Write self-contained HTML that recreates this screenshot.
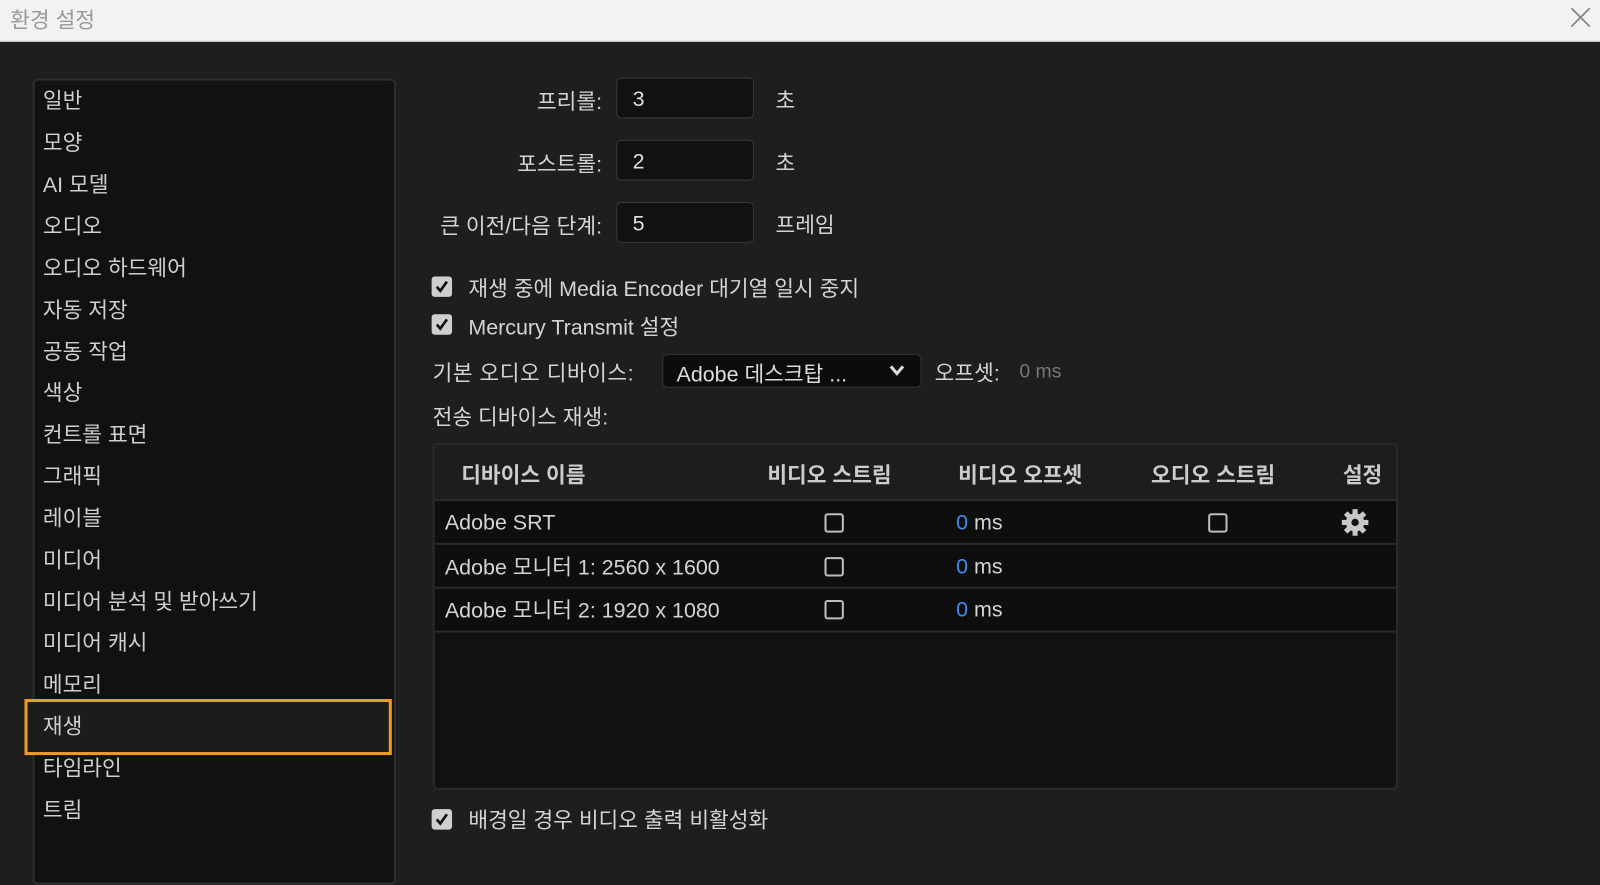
<!DOCTYPE html>
<html><head><meta charset="utf-8"><style>
*{box-sizing:border-box;margin:0;padding:0}
body{width:1600px;height:847px;overflow:hidden;background:#1e1e1e;font-family:"Liberation Sans","Noto Sans CJK KR",sans-serif;color:#d4d4d4;position:relative;font-size:21px}
#w{position:absolute;left:0;top:0;width:1568px;height:830px;transform:scale(1.0204);transform-origin:0 0}
.abs{position:absolute;white-space:nowrap}
.title{position:absolute;left:0;top:0;width:1600px;height:41px;background:#f2f2f2;border-bottom:1px solid #ccc}
.side{position:absolute;left:32px;top:77px;width:356px;height:790px;background:#111;border:2px solid #2e2e2e;border-radius:5px}
.it{position:absolute;left:42px;font-size:21px;color:#cfcfcf;line-height:24px;margin-top:3px}
.lbl{position:absolute;right:978px;text-align:right;white-space:nowrap}
.inp{position:absolute;left:604px;width:135px;height:40px;background:#111;border:1px solid #383838;border-radius:5px;padding:9px 0 0 15px;color:#e0e0e0}
.cb{position:absolute;left:423px;width:20px;height:20px;background:#cfcfcf;border-radius:3px}
.cb svg{position:absolute;left:2px;top:2px}
.sq{position:absolute;width:19px;height:19px;border:2.5px solid #bdbdbd;border-radius:3px}
.row{position:absolute;left:0;width:943px;border-bottom:2px solid #2b2b2b;background:#0e0e0e}
</style></head><body>
<div id="w">
<div class="title" style="width:1568px"></div>
<div class="abs" style="left:10px;top:4px;font-size:21px;color:#999">환경 설정</div>
<svg class="abs" style="left:1538px;top:6px" width="22" height="22"><path d="M2 2L20 20M20 2L2 20" stroke="#888" stroke-width="1.8"/></svg>
<div class="side"></div>
<div class="it" style="top:85px">일반</div>
<div class="it" style="top:126px">모양</div>
<div class="it" style="top:167px">AI 모델</div>
<div class="it" style="top:208px">오디오</div>
<div class="it" style="top:249px">오디오 하드웨어</div>
<div class="it" style="top:290px">자동 저장</div>
<div class="it" style="top:331px">공동 작업</div>
<div class="it" style="top:371px">색상</div>
<div class="it" style="top:412px">컨트롤 표면</div>
<div class="it" style="top:453px">그래픽</div>
<div class="it" style="top:494px">레이블</div>
<div class="it" style="top:535px">미디어</div>
<div class="it" style="top:576px">미디어 분석 및 받아쓰기</div>
<div class="it" style="top:616px">미디어 캐시</div>
<div class="it" style="top:657px">메모리</div>
<div class="abs" style="left:24px;top:685px;width:360px;height:55px;border:3px solid #f09a26;background:#1c1c1c"></div>
<div class="it" style="top:698px">재생</div>
<div class="it" style="top:739px">타임라인</div>
<div class="it" style="top:780px">트림</div>

<div class="lbl" style="top:84px">프리롤:</div>
<div class="inp" style="top:76px">3</div>
<div class="abs" style="left:760px;top:83px">초</div>
<div class="lbl" style="top:145px">포스트롤:</div>
<div class="inp" style="top:137px">2</div>
<div class="abs" style="left:760px;top:144px">초</div>
<div class="lbl" style="top:206px">큰 이전/다음 단계:</div>
<div class="inp" style="top:198px">5</div>
<div class="abs" style="left:760px;top:205px">프레임</div>

<div class="cb" style="top:271px"><svg width="16" height="16"><path d="M3 8L6.5 12L13 3" stroke="#111" stroke-width="2.6" fill="none"/></svg></div>
<div class="abs" style="left:459px;top:267px">재생 중에 Media Encoder 대기열 일시 중지</div>
<div class="cb" style="top:308px"><svg width="16" height="16"><path d="M3 8L6.5 12L13 3" stroke="#111" stroke-width="2.6" fill="none"/></svg></div>
<div class="abs" style="left:459px;top:305px">Mercury Transmit 설정</div>
<div class="abs" style="left:424px;top:350px;letter-spacing:0.5px">기본 오디오 디바이스:</div>
<div class="abs" style="left:649px;top:347px;width:254px;height:33px;background:#0c0c0c;border:1px solid #333;border-radius:5px;padding:3px 0 0 13px;color:#ddd">Adobe 데스크탑 ...</div>
<svg class="abs" style="left:871px;top:357px" width="16" height="12"><path d="M2 2L8 9L14 2" stroke="#ddd" stroke-width="3" fill="none"/></svg>
<div class="abs" style="left:916px;top:350px">오프셋:</div>
<div class="abs" style="left:999px;top:354px;font-size:19px;color:#777">0 ms</div>
<div class="abs" style="left:424px;top:393px">전송 디바이스 재생:</div>

<div class="abs" style="left:424px;top:434px;width:946px;height:340px;background:#111;border:2px solid #2b2b2b;border-radius:5px;overflow:hidden">
 <div class="row" style="top:0;height:55px;background:#1d1d1d"></div>
 <div class="abs" style="left:26px;top:14px;font-weight:bold;color:#ccc">디바이스 이름</div>
 <div class="abs" style="left:326px;top:14px;font-weight:bold;color:#ccc">비디오 스트림</div>
 <div class="abs" style="left:513px;top:14px;font-weight:bold;color:#ccc">비디오 오프셋</div>
 <div class="abs" style="left:702px;top:14px;font-weight:bold;color:#ccc">오디오 스트림</div>
 <div class="abs" style="left:890px;top:14px;font-weight:bold;color:#ccc">설정</div>
 <div class="row" style="top:55px;height:43px"></div>
 <div class="row" style="top:98px;height:43px"></div>
 <div class="row" style="top:141px;height:43px"></div>
 <div class="abs" style="left:10px;top:65px">Adobe SRT</div>
 <div class="abs" style="left:10px;top:104px">Adobe 모니터 1: 2560 x 1600</div>
 <div class="abs" style="left:10px;top:146px">Adobe 모니터 2: 1920 x 1080</div>
 <div class="sq" style="left:382px;top:67px"></div>
 <div class="sq" style="left:382px;top:110px"></div>
 <div class="sq" style="left:382px;top:152px"></div>
 <div class="sq" style="left:758px;top:67px"></div>
 <div class="abs" style="left:511px;top:65px"><span style="color:#3b8ef0">0</span> ms</div>
 <div class="abs" style="left:511px;top:108px"><span style="color:#3b8ef0">0</span> ms</div>
 <div class="abs" style="left:511px;top:150px"><span style="color:#3b8ef0">0</span> ms</div>
 <svg class="abs" style="left:888px;top:62px" width="28" height="28" viewBox="0 0 28 28"><g fill="#c8c8c8"><circle cx="14" cy="14" r="9"/><rect x="11.5" y="1" width="5" height="26"/><rect x="1" y="11.5" width="26" height="5"/><rect x="11.5" y="1" width="5" height="26" transform="rotate(45 14 14)"/><rect x="11.5" y="1" width="5" height="26" transform="rotate(-45 14 14)"/></g><circle cx="14" cy="14" r="3.6" fill="#111"/></svg>
</div>

<div class="cb" style="top:793px"><svg width="16" height="16"><path d="M3 8L6.5 12L13 3" stroke="#111" stroke-width="2.6" fill="none"/></svg></div>
<div class="abs" style="left:459px;top:788px">배경일 경우 비디오 출력 비활성화</div>
</div>
</body></html>
